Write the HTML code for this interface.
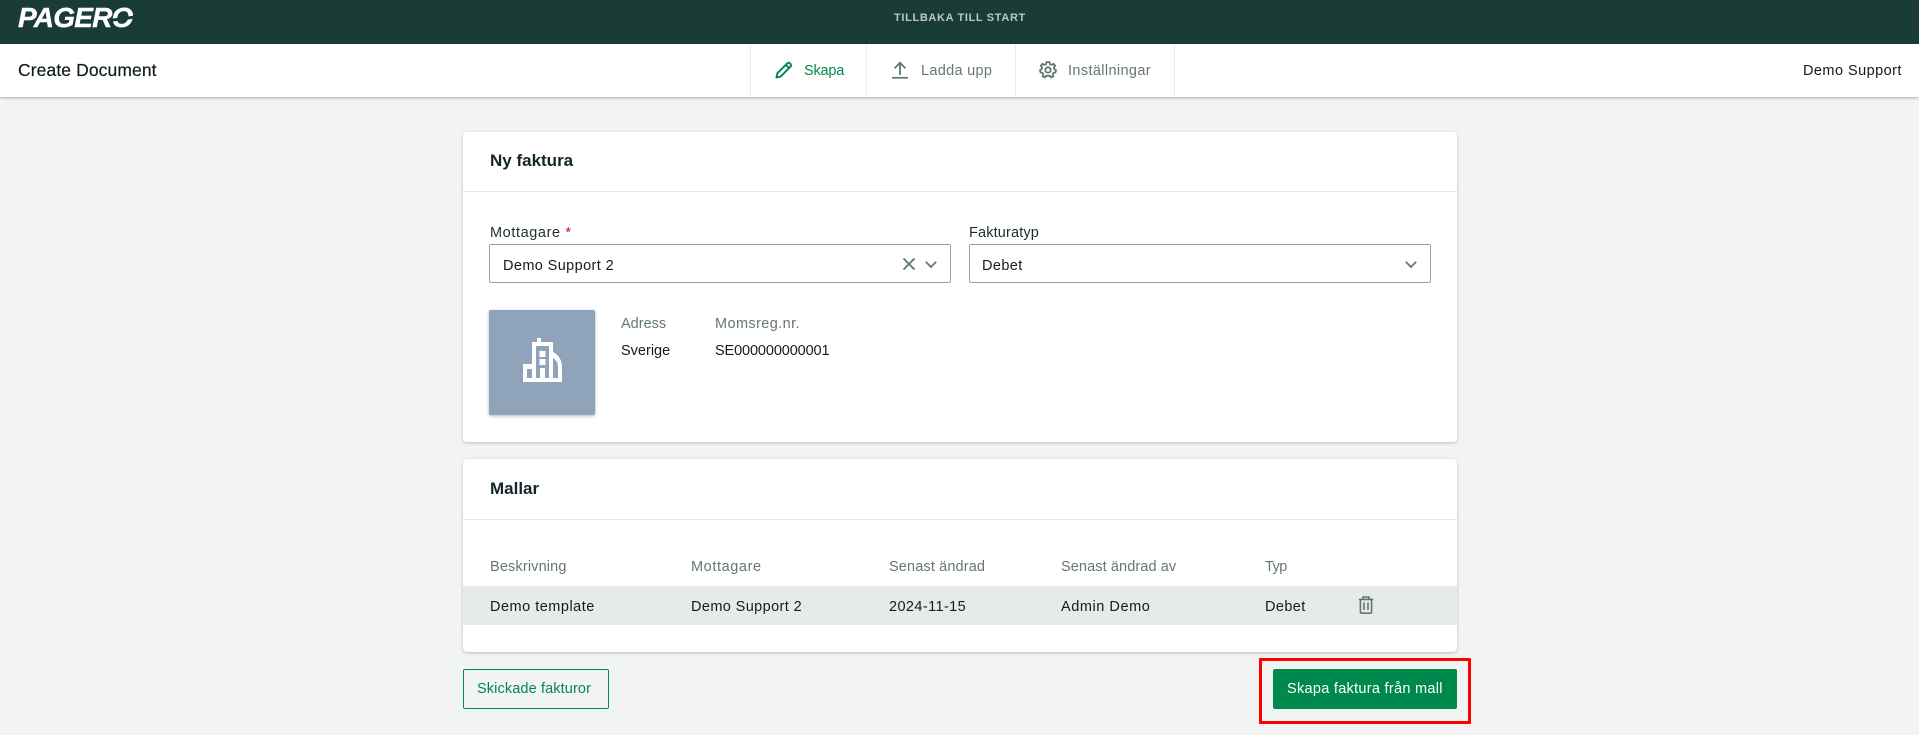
<!DOCTYPE html>
<html lang="sv">
<head>
<meta charset="utf-8">
<title>Create Document</title>
<style>
html,body{margin:0;padding:0;width:1919px;height:735px;overflow:hidden;background:#f2f4f3;font-family:"Liberation Sans",sans-serif;color:#111c1f;}
.a{position:absolute;white-space:nowrap;line-height:20px;font-size:14.5px;}
.g{color:#66757a;}
.card{position:absolute;left:463px;width:994px;background:#fff;border-radius:4px;box-shadow:0 1px 3px rgba(30,50,50,.28);}
.line{position:absolute;background:#e6e9e8;height:1px;}
.sep{position:absolute;top:44px;width:1px;height:53px;background:#eceeee;}
.box{position:absolute;top:244px;height:37px;width:460px;border:1px solid #8ea39d;border-radius:2px;background:#fff;}
svg{position:absolute;overflow:visible;}
</style>
</head>
<body>
<div style="position:absolute;left:0;top:0;width:1919px;height:44px;background:#1a3c36;"></div>
<div class="a" style="left:18px;top:2px;line-height:32px;font-size:28px;font-weight:bold;font-style:italic;color:#fff;letter-spacing:-.8px;-webkit-text-stroke:.4px #fff;">PAGERO</div>
<div style="position:absolute;left:112px;top:17px;width:24px;height:3px;background:#1a3c36;transform:rotate(-8deg);"></div>
<div class="a" style="left:894px;top:8px;font-size:11px;font-weight:bold;letter-spacing:.65px;color:#b9c8c6;">TILLBAKA TILL START</div>

<div style="position:absolute;left:0;top:44px;width:1919px;height:53px;background:#fff;box-shadow:0 1px 3px rgba(30,50,50,.35);"></div>
<div class="sep" style="left:750px"></div><div class="sep" style="left:866px"></div><div class="sep" style="left:1015px"></div><div class="sep" style="left:1174px"></div>
<div class="a" style="left:18px;top:60px;font-size:17.5px;letter-spacing:.1px;color:#111c1f;-webkit-text-stroke:.2px #111c1f;">Create Document</div>

<svg style="left:775px;top:61px" width="18" height="18" viewBox="0 0 18 18" fill="none" stroke="#00894c" stroke-width="1.9" stroke-linejoin="round"><path d="M1.500 16.500 L2.400 12.200 L12.200 2.400 Q13.600 1 15.200 2.500 Q16.900 4.200 15.400 5.700 L5.700 15.600 Z"/><path d="M10.800 3.800 L14 7"/></svg>
<div class="a" style="left:804px;top:61px;color:#00894c;letter-spacing:-.2px;">Skapa</div>
<svg style="left:891px;top:61px" width="18" height="18" viewBox="0 0 18 18" fill="none" stroke="#5f7673" stroke-width="1.8"><path d="M9 14 V2 M3.600 7.200 L9 1.800 L14.400 7.200"/><path d="M1 16.800 H17" stroke-width="1.7"/></svg>
<div class="a" style="left:921px;top:61px;color:#66757a;letter-spacing:.3px;">Ladda upp</div>
<svg style="left:1039px;top:61px" width="18" height="18" viewBox="0 0 18 18" fill="none" stroke="#5f7673" stroke-width="1.8" stroke-linejoin="round"><circle cx="9" cy="9" r="2.700"/><path d="M7.600 1 H10.400 L10.900 3.200 L12.600 3.900 L14.500 2.800 L16.200 4.800 L14.800 6.400 L15.200 8 L17 9 L16.400 11.600 L14.600 11.600 L13.600 13.200 L14.400 15.200 L12 16.400 L10.800 14.800 H7.200 L6 16.400 L3.600 15.200 L4.400 13.200 L3.400 11.600 L1.600 11.600 L1 9 L2.800 8 L3.200 6.400 L1.800 4.800 L3.500 2.800 L5.400 3.900 L7.100 3.200 Z"/></svg>
<div class="a" style="left:1068px;top:61px;color:#66757a;letter-spacing:.37px;">Inställningar</div>
<div class="a" style="left:1803px;top:61px;color:#111c1f;letter-spacing:.45px;">Demo Support</div>

<div class="card" style="top:132px;height:310px;"></div>
<div class="line" style="left:463px;top:191px;width:994px;"></div>
<div class="a" style="left:490px;top:151px;font-size:17px;font-weight:bold;color:#14262a;">Ny faktura</div>
<div class="a" style="left:490px;top:223px;letter-spacing:.6px;color:#1f2d30;">Mottagare <span style="color:#c8102e;">*</span></div>
<div class="a" style="left:969px;top:223px;letter-spacing:.15px;color:#1f2d30;">Fakturatyp</div>
<div class="box" style="left:489px;"></div>
<div class="box" style="left:969px;"></div>
<div class="a" style="left:503px;top:256px;letter-spacing:.39px;">Demo Support 2</div>
<div class="a" style="left:982px;top:256px;letter-spacing:.4px;">Debet</div>
<svg style="left:903px;top:258px" width="12" height="12" viewBox="0 0 12 12" fill="none" stroke="#5f7673" stroke-width="1.900"><path d="M.5 .5 L11.500 11.500 M11.500 .5 L.5 11.500"/></svg>
<svg style="left:925px;top:261px" width="12" height="7" viewBox="0 0 12 7" fill="none" stroke="#5f7673" stroke-width="1.800"><path d="M.8 .8 L6 6 L11.200 .8"/></svg>
<svg style="left:1405px;top:261px" width="12" height="7" viewBox="0 0 12 7" fill="none" stroke="#5f7673" stroke-width="1.800"><path d="M.8 .8 L6 6 L11.200 .8"/></svg>

<div style="position:absolute;left:489px;top:310px;width:106px;height:105px;background:#8fa3bb;border-radius:2px;box-shadow:0 1px 3px rgba(30,50,50,.35);"></div>
<svg style="left:522px;top:338px" width="41" height="45" viewBox="0 0 41 45"><path fill="#fff" fill-rule="evenodd" d="M1 44 V26 H10 V4 H15 V0 H19 V4 H31 V14 Q40 19 40 29 V44 Z M5 31 V40 H10 V31 Z M14 8 V40 H18 V30 H23 V40 H27 V8 Z M31 20 V40 H36 V29 Q36 23 31 20 Z"/><path fill="#fff" d="M17.500 13 H23.500 V19 H17.500 Z M17.500 21 H23.500 V27 H17.500 Z"/></svg>
<div class="a g" style="left:621px;top:314px;">Adress</div>
<div class="a" style="left:621px;top:341px;">Sverige</div>
<div class="a g" style="left:715px;top:314px;letter-spacing:.4px;">Momsreg.nr.</div>
<div class="a" style="left:715px;top:341px;letter-spacing:-.12px;">SE000000000001</div>

<div class="card" style="top:459px;height:193px;"></div>
<div class="line" style="left:463px;top:519px;width:994px;"></div>
<div class="a" style="left:490px;top:479px;font-size:17px;font-weight:bold;color:#14262a;">Mallar</div>
<div class="a g" style="left:490px;top:557px;letter-spacing:.15px;">Beskrivning</div>
<div class="a g" style="left:691px;top:557px;letter-spacing:.6px;">Mottagare</div>
<div class="a g" style="left:889px;top:557px;letter-spacing:.14px;">Senast ändrad</div>
<div class="a g" style="left:1061px;top:557px;letter-spacing:.1px;">Senast ändrad av</div>
<div class="a g" style="left:1265px;top:557px;letter-spacing:-.5px;">Typ</div>
<div style="position:absolute;left:463px;top:586px;width:994px;height:39px;background:#e7eaea;"></div>
<div class="a" style="left:490px;top:597px;letter-spacing:.5px;">Demo template</div>
<div class="a" style="left:691px;top:597px;letter-spacing:.39px;">Demo Support 2</div>
<div class="a" style="left:889px;top:597px;letter-spacing:.4px;">2024-11-15</div>
<div class="a" style="left:1061px;top:597px;letter-spacing:.55px;">Admin Demo</div>
<div class="a" style="left:1265px;top:597px;letter-spacing:.4px;">Debet</div>
<svg style="left:1358px;top:596px" width="16" height="18" viewBox="0 0 16 18" fill="none" stroke="#5f7673" stroke-width="1.600"><path d="M.8 3.400 H15.200 M5 3 V1 H11 V3 M2.400 3.400 V16 Q2.400 17.200 3.600 17.200 H12.400 Q13.600 17.200 13.600 16 V3.400 M6 6.500 V14 M10 6.500 V14"/></svg>

<div style="position:absolute;left:463px;top:669px;width:144px;height:38px;border:1px solid #00894c;border-radius:2px;"></div>
<div class="a" style="left:477px;top:679px;color:#00894c;letter-spacing:.12px;">Skickade fakturor</div>
<div style="position:absolute;left:1273px;top:669px;width:184px;height:40px;background:#00894c;border-radius:2px;"></div>
<div class="a" style="left:1287px;top:679px;color:#fff;letter-spacing:.29px;">Skapa faktura från mall</div>
<div style="position:absolute;left:1259px;top:658px;width:206px;height:60px;border:3px solid #ff0000;border-radius:1px;"></div>
</body>
</html>
